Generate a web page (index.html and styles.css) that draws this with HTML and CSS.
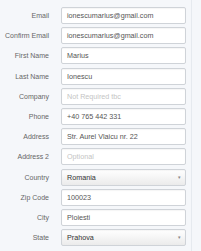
FILE: index.html
```html
<!DOCTYPE html>
<html lang="en">
<head>
    <meta charset="UTF-8">
    <title>Account details</title>
    <link rel="stylesheet" href="styles.css">
</head>
<body>
    <form class="form">
        <div class="row"><label>Email</label><div class="field">ionescumarius@gmail.com</div></div>
        <div class="row"><label>Confirm Email</label><div class="field">ionescumarius@gmail.com</div></div>
        <div class="row"><label>First Name</label><div class="field">Marius</div></div>
        <div class="row"><label>Last Name</label><div class="field">Ionescu</div></div>
        <div class="row"><label>Company</label><div class="field placeholder">Not Required tbc</div></div>
        <div class="row"><label>Phone</label><div class="field">+40 765 442 331</div></div>
        <div class="row"><label>Address</label><div class="field">Str. Aurel Vlaicu nr. 22</div></div>
        <div class="row"><label>Address 2</label><div class="field placeholder">Optional</div></div>
        <div class="row"><label>Country</label><div class="field select">Romania<span class="arrow">&#9662;</span></div></div>
        <div class="row"><label>Zip Code</label><div class="field">100023</div></div>
        <div class="row"><label>City</label><div class="field">Ploiesti</div></div>
        <div class="row"><label>State</label><div class="field select">Prahova<span class="arrow">&#9662;</span></div></div>
    </form>
</body>
</html>
```

FILE: styles.css
```css
* {
    box-sizing: border-box;
    margin: 0;
    padding: 0;
    font-family: 'Liberation Sans', Arial, sans-serif;
}

body {
    background: #f5f7fa;
    width: 201px;
    height: 251px;
    overflow: hidden;
}

.form {
    display: flex;
    flex-direction: column;
    gap: 3.2px;
    padding-top: 7px;
    width: 192px;
    height: 251px;
    border-right: 1px solid #e6eaef;
}

.row {
    display: flex;
    align-items: center;
    height: 17px;
}

.row label {
    width: 49px;
    text-align: right;
    color: #666;
    font-size: 7px;
}

.field {
    margin-left: 12px;
    width: 125px;
    height: 17px;
    background: white;
    border: 1px solid #cfd3d8;
    border-radius: 2px;
    color: #555;
    font-size: 7.2px;
    line-height: 15px;
    padding-left: 5px;
    position: relative;
    box-shadow: inset 0 1px 1px rgba(0,0,0,0.04);
}

.placeholder {
    color: #c4c4c4;
}

.select {
    background: linear-gradient(#ffffff, #ebebeb);
    color: #333;
}

.arrow {
    position: absolute;
    right: 4px;
    top: 0;
    font-size: 5px;
    color: #888;
}
```
